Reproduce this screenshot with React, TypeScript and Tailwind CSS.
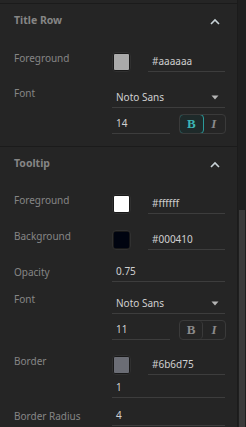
import React from "react";

function Chevron() {
  return (
    <svg width="10" height="7" viewBox="0 0 10 7" className="text-[#c9d3d8]">
      <path d="M1 6 L5 2 L9 6" fill="none" stroke="currentColor" strokeWidth="1.6" />
    </svg>
  );
}

function Caret() {
  return (
    <svg width="8" height="5" viewBox="0 0 8 5" className="text-[#b5b5b5]">
      <path d="M0.5 0.5 H7.5 L4 4.5 Z" fill="currentColor" />
    </svg>
  );
}

function Label({ text, className = "" }: { text: string; className?: string }) {
  return (
    <div className={`w-[98px] shrink-0 text-[10px] text-[#858585] ${className}`}>{text}</div>
  );
}

function Input({ value, className = "" }: { value: string; className?: string }) {
  return (
    <div
      className={`h-[20px] border-b border-[#3d3d3d] pl-[4px] text-[10px] leading-[19px] text-[#d0d0d0] ${className}`}
    >
      {value}
    </div>
  );
}

function ColorRow({ label, color, hex, className = "" }: { label: string; color: string; hex: string; className?: string }) {
  return (
    <div className={`flex ${className}`}>
      <Label text={label} className="leading-[12px]" />
      <div className="flex w-[114px]">
        <div className="w-[19px] h-[20px] rounded-[4px] bg-[#181818] border border-[#303030] p-[1px]">
          <div className="w-full h-full rounded-[1px]" style={{ backgroundColor: color }} />
        </div>
        <Input value={hex} className="ml-[17px] flex-1" />
      </div>
    </div>
  );
}

function FontRows({ size, bold, className = "" }: { size: string; bold: boolean; className?: string }) {
  return (
    <div className={className}>
      <div className="flex">
        <Label text="Font" className="leading-[12px] -mt-[1px]" />
        <div className="w-[114px] h-[20px] border-b border-[#3d3d3d] pl-[4px] pr-[6px] flex items-center justify-between text-[10px] text-[#d0d0d0]">
          <span>Noto Sans</span>
          <Caret />
        </div>
      </div>
      <div className="flex mt-[6px]">
        <div className="w-[98px] shrink-0" />
        <div className="w-[114px] flex">
          <Input value={size} className="w-[58px]" />
          <div className="ml-[9px] flex h-[20px] w-[47px] rounded-[4px] border border-[#3a3a3a] overflow-hidden font-['Liberation_Serif',serif] text-[13px]">
            <div
              className={`flex-1 flex items-center justify-center font-bold rounded-[4px] ${
                bold ? "border border-[#2b9a9a] bg-[#1e2a2a] text-[#3bb5b5] -m-px" : "text-[#8a8a8a] border-r border-[#3a3a3a]"
              }`}
            >
              B
            </div>
            <div className="flex-1 flex items-center justify-center italic font-bold text-[#8a8a8a]">I</div>
          </div>
        </div>
      </div>
    </div>
  );
}

function Header({ title }: { title: string }) {
  return (
    <div className="h-[34px] flex items-center justify-between pr-[5px]">
      <span className="text-[10.5px] font-bold text-[#858585]">{title}</span>
      <Chevron />
    </div>
  );
}

export default function App() {
  return (
    <div className="w-[246px] h-[427px] overflow-hidden flex bg-[#252525] font-['Noto_Sans',sans-serif]">
      <div className="w-[238px] shrink-0 border-r border-[#1b1b1b]">
        <div className="h-[4px] border-b border-[#1b1b1b]" />

        <div className="pl-[14px] pr-[12px] pb-[12px] border-b border-[#1b1b1b]">
          <Header title="Title Row" />
          <ColorRow label="Foreground" color="#aaaaaa" hex="#aaaaaa" className="mt-[14px]" />
          <FontRows size="14" bold={true} className="mt-[16px]" />
        </div>

        <div className="pl-[14px] pr-[12px]">
          <Header title="Tooltip" />
          <ColorRow label="Foreground" color="#ffffff" hex="#ffffff" className="mt-[13px]" />
          <ColorRow label="Background" color="#000410" hex="#000410" className="mt-[16px]" />
          <div className="flex mt-[12px]">
            <Label text="Opacity" className="leading-[20px]" />
            <Input value="0.75" className="w-[114px]" />
          </div>
          <FontRows size="11" bold={false} className="mt-[12px]" />
          <ColorRow label="Border" color="#6b6d75" hex="#6b6d75" className="mt-[15px]" />
          <div className="flex mt-[3px]">
            <div className="w-[98px] shrink-0" />
            <Input value="1" className="w-[114px]" />
          </div>
          <div className="flex mt-[8px]">
            <Label text="Border Radius" className="leading-[20px]" />
            <Input value="4" className="w-[114px]" />
          </div>
        </div>
      </div>
      <div className="flex-1 bg-[#1f1f1f] flex flex-col">
        <div className="h-[210px]" />
        <div className="flex-1 mx-[1px] bg-[#3b3b3b]" />
      </div>
    </div>
  );
}
